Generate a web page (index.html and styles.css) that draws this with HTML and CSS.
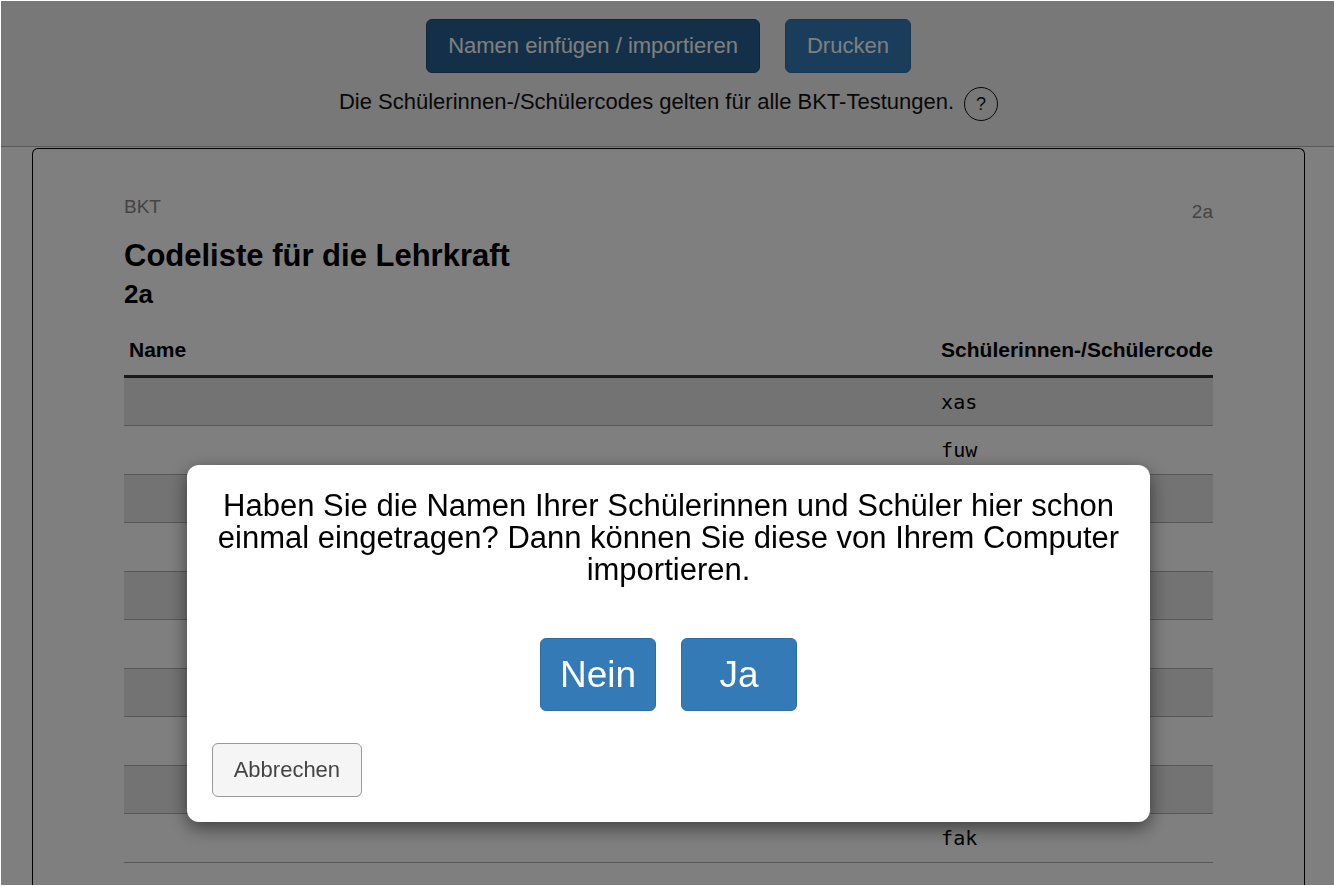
FILE: index.html
```html
<!DOCTYPE html>
<html lang="de">
<head>
<meta charset="utf-8">
<title>Codeliste für die Lehrkraft</title>
<link rel="stylesheet" href="styles.css">
</head>
<body>
<div class="page">
  <header class="toolbar">
    <div class="toolbar-actions">
      <button class="btn btn-primary btn-active" type="button">Namen einfügen / importieren</button>
      <button class="btn btn-primary" type="button">Drucken</button>
    </div>
    <div class="toolbar-note">
      <p class="note-text">Die Schülerinnen-/Schülercodes gelten für alle BKT-Testungen.</p>
      <button class="help" type="button" aria-label="Hilfe">?</button>
    </div>
  </header>
  <main class="sheet">
    <div class="sheet-meta">
      <span>BKT</span>
      <span class="meta-class">2a</span>
    </div>
    <h1 class="title">Codeliste für die Lehrkraft</h1>
    <h2 class="subtitle">2a</h2>
    <table class="codes">
      <thead>
        <tr><th class="col-name" scope="col">Name</th><th class="col-code" scope="col">Schülerinnen-/Schülercode</th></tr>
      </thead>
      <tbody>
        <tr><td></td><td class="code">xas</td></tr>
        <tr><td></td><td class="code">fuw</td></tr>
        <tr><td></td><td class="code"></td></tr>
        <tr><td></td><td class="code"></td></tr>
        <tr><td></td><td class="code"></td></tr>
        <tr><td></td><td class="code"></td></tr>
        <tr><td></td><td class="code"></td></tr>
        <tr><td></td><td class="code"></td></tr>
        <tr><td></td><td class="code"></td></tr>
        <tr><td></td><td class="code">fak</td></tr>
      </tbody>
    </table>
  </main>
</div>
<div class="overlay">
  <div class="modal" role="dialog" aria-modal="true" aria-labelledby="question">
    <p class="question" id="question">Haben Sie die Namen Ihrer Schülerinnen und Schüler hier schon einmal eingetragen? Dann können Sie diese von Ihrem Computer importieren.</p>
    <div class="choices">
      <button class="btn btn-primary btn-large" type="button">Nein</button>
      <button class="btn btn-primary btn-large" type="button">Ja</button>
    </div>
    <button class="btn btn-cancel" type="button">Abbrechen</button>
  </div>
</div>
</body>
</html>
```
FILE: styles.css
```css
* {
  box-sizing: border-box;
}

html {
  height: 100%;
  overflow: hidden;
  background: #fff;
}

body {
  height: 100%;
  margin: 0;
  overflow: hidden;
  font-family: "Liberation Sans", Arial, sans-serif;
  font-size: 22px;
  color: #000;
}

p,
h1,
h2 {
  margin: 0;
}

.page {
  display: flex;
  flex-direction: column;
  height: 100%;
  padding: 1px 0 1px 1px;
  overflow: hidden;
}

.toolbar {
  flex: none;
  display: flex;
  flex-direction: column;
  align-items: center;
  gap: 14px;
  padding: 18px 0 25px 2px;
  background: #f0f0f0;
  border-bottom: 1px solid #b0b0b0;
}

.toolbar-actions {
  display: flex;
  gap: 25px;
}

.toolbar-note {
  display: flex;
  align-items: center;
  gap: 10px;
}

.note-text {
  line-height: 30px;
  padding-bottom: 4px;
  color: #111;
}

.btn {
  padding: 0 21px;
  border: 1px solid;
  border-radius: 6px;
  font-family: inherit;
  font-size: 22px;
  line-height: 52px;
}

.btn-primary {
  background: #337ab7;
  border-color: #2e6da4;
  color: #fff;
}

.btn-active {
  background: #286090;
  border-color: #204d74;
}

.help {
  width: 34px;
  height: 34px;
  padding: 0;
  border: 1px solid #111;
  border-radius: 50%;
  background: none;
  font-family: inherit;
  font-size: 18px;
  color: #111;
}

.sheet {
  flex: 1 0 auto;
  margin: 1px 29px 0 31px;
  padding: 46px 91px 0;
  border: 1px solid #000;
  border-bottom: 0;
  border-radius: 6px 6px 0 0;
}

.sheet-meta {
  display: flex;
  justify-content: space-between;
  font-size: 19px;
  line-height: 24px;
  color: #888;
}

.meta-class {
  padding-top: 5px;
}

.title {
  padding-top: 12px;
  font-size: 31px;
  line-height: 40px;
}

.subtitle {
  font-size: 26px;
  line-height: 36px;
}

.codes {
  width: 100%;
  margin-top: 16px;
  border-collapse: separate;
  border-spacing: 0;
}

.codes th {
  height: 50px;
  padding: 0 0 4px;
  border-bottom: 3px solid #333;
  text-align: left;
  font-size: 21px;
  font-weight: bold;
  white-space: nowrap;
}

.codes .col-name {
  padding-left: 5px;
}

.codes .col-code {
  width: 269px;
}

.codes td {
  height: 49px;
  padding: 0;
  border-bottom: 1px solid #b0b0b0;
}

.codes tr:nth-child(odd) td {
  height: 48px;
  background: #e6e6e6;
}

.codes .code {
  font-family: "DejaVu Sans Mono", monospace;
  font-size: 20px;
}

.overlay {
  position: fixed;
  inset: 1px 0 1px 1px;
  display: flex;
  align-items: flex-end;
  justify-content: center;
  padding: 0 0 63px 2px;
  background: rgba(0, 0, 0, 0.5);
}

.modal {
  display: flex;
  flex-direction: column;
  width: 72.4%;
  padding: 25px;
  border-radius: 12px;
  background: #fff;
  box-shadow: 0 6px 18px rgba(0, 0, 0, 0.5);
}

.question {
  font-size: 31px;
  line-height: 32px;
  text-align: center;
}

.choices {
  display: flex;
  justify-content: center;
  gap: 25px;
  margin: 52px 0 32px;
}

.btn-large {
  min-width: 116px;
  padding: 0 19px;
  font-size: 37px;
  line-height: 71px;
}

.btn-cancel {
  align-self: flex-start;
  background: #f5f5f5;
  border-color: #999;
  color: #444;
}
```
